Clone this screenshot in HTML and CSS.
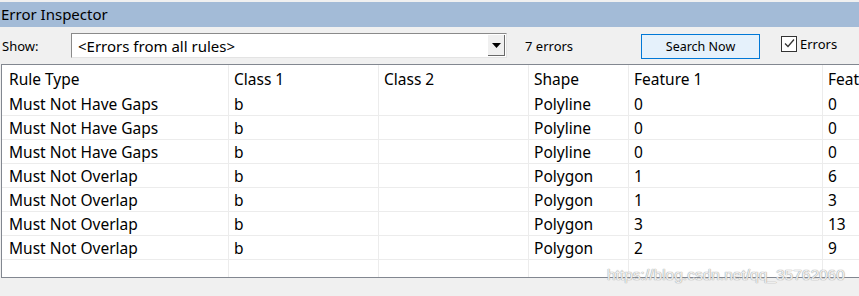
FILE: index.html
```html
<!DOCTYPE html>
<html lang="en">
<head>
  <meta charset="UTF-8" />
  <title>Error Inspector</title>
  <link rel="stylesheet" href="styles.css">
</head>
<body>
  <div class="titlebar">Error Inspector</div>

  <div class="toolbar">
    <span class="show-label">Show:</span>
    <div class="combo">
      <span class="combo-text">&lt;Errors from all rules&gt;</span>
      <span class="combo-btn">
        <svg width="9" height="5" viewBox="0 0 9 5"><polygon points="0,0 9,0 4.5,5" fill="#000"/></svg>
      </span>
    </div>
    <span class="count">7 errors</span>
    <button class="search-btn">Search Now</button>
    <label class="check">
      <span class="box">
        <svg width="13" height="13" viewBox="0 0 13 13"><polyline points="2,6.5 5,9.5 11,2.5" fill="none" stroke="#333" stroke-width="1.3"/></svg>
      </span>
      Errors
    </label>
  </div>

  <div class="grid">
    <table>
      <colgroup>
        <col style="width: 227px">
        <col style="width: 150px">
        <col style="width: 150px">
        <col style="width: 100px">
        <col style="width: 194px">
        <col style="width: 150px">
      </colgroup>
      <thead>
        <tr><th>Rule Type</th><th>Class 1</th><th>Class 2</th><th>Shape</th><th>Feature 1</th><th>Feature 2</th></tr>
      </thead>
      <tbody>
        <tr><td>Must Not Have Gaps</td><td>b</td><td></td><td>Polyline</td><td>0</td><td>0</td></tr>
        <tr><td>Must Not Have Gaps</td><td>b</td><td></td><td>Polyline</td><td>0</td><td>0</td></tr>
        <tr><td>Must Not Have Gaps</td><td>b</td><td></td><td>Polyline</td><td>0</td><td>0</td></tr>
        <tr><td>Must Not Overlap</td><td>b</td><td></td><td>Polygon</td><td>1</td><td>6</td></tr>
        <tr><td>Must Not Overlap</td><td>b</td><td></td><td>Polygon</td><td>1</td><td>3</td></tr>
        <tr><td>Must Not Overlap</td><td>b</td><td></td><td>Polygon</td><td>3</td><td>13</td></tr>
        <tr><td>Must Not Overlap</td><td>b</td><td></td><td>Polygon</td><td>2</td><td>9</td></tr>
        <tr class="filler"><td></td><td></td><td></td><td></td><td></td><td></td></tr>
      </tbody>
    </table>
  </div>

  <div class="watermark">https://blog.csdn.net/qq_35762060</div>
</body>
</html>
```

FILE: styles.css
```css
body {
  margin: 0;
  background: #f0f0f0;
  font-family: "Noto Sans", "Open Sans", sans-serif;
  font-size: 14px;
  color: #000;
  width: 859px;
  height: 296px;
  overflow: hidden;
  position: relative;
}

.titlebar {
  margin-top: 2px;
  height: 25px;
  line-height: 25px;
  background: #a3bbd7;
  padding-left: 1px;
  font-size: 15px;
}

.toolbar {
  height: 37px;
  display: flex;
  align-items: center;
}

.show-label {
  width: 69px;
  padding-left: 2px;
  font-size: 13px;
}

.combo {
  width: 436px;
  height: 25px;
  box-sizing: border-box;
  background: #fff;
  border: 1px solid #e3e3e3;
  border-top-color: #8a8a8a;
  border-left-color: #8a8a8a;
  display: flex;
  align-items: center;
  justify-content: space-between;
}

.combo-text {
  padding-left: 6px;
  font-size: 15px;
}

.combo-btn {
  width: 17px;
  height: 21px;
  box-sizing: border-box;
  background: #f0f0f0;
  border-right: 1px solid #696969;
  border-bottom: 1px solid #696969;
  display: flex;
  align-items: center;
  justify-content: center;
  margin-right: 1px;
}

.count {
  width: 116px;
  margin-left: 18px;
  font-size: 13px;
}

.search-btn {
  width: 119px;
  height: 25px;
  margin-top: 2px;
  border: 1px solid #0078d7;
  background: #e5f1fb;
  font-family: inherit;
  font-size: 12.5px;
  color: #000;
  padding: 0;
}

.check {
  margin-left: 21px;
  display: flex;
  align-items: center;
  gap: 3px;
  font-size: 13px;
  margin-top: -4px;
}

.box {
  width: 16px;
  height: 16px;
  box-sizing: border-box;
  border: 1px solid #333;
  background: #fff;
  display: flex;
  align-items: center;
  justify-content: center;
}

.grid {
  margin-left: 1px;
  width: 900px;
  height: 214px;
  box-sizing: border-box;
  border: 1px solid #828790;
  border-right: none;
  background: #fff;
  overflow: hidden;
}

table {
  table-layout: fixed;
  border-collapse: separate;
  border-spacing: 0;
  width: 971px;
  font-size: 15.5px;
}

th, td {
  box-sizing: border-box;
  border-right: 1px solid #ececec;
  padding: 0 0 0 5px;
  text-align: left;
  font-weight: normal;
  white-space: nowrap;
  overflow: hidden;
}

th:first-child, td:first-child {
  padding-left: 7px;
}

th {
  height: 27px;
}

td {
  height: 24px;
  border-bottom: 1px solid #ececec;
}

.filler td {
  height: 17px;
  border-bottom: none;
}

.watermark {
  position: absolute;
  left: 607px;
  top: 266px;
  font-family: "Liberation Sans", Arial, sans-serif;
  font-size: 15.5px;
  color: rgba(255, 255, 255, 0.85);
  text-shadow: 0 0 1px #9a9a9a, 0 0 1px #9a9a9a;
}
```
